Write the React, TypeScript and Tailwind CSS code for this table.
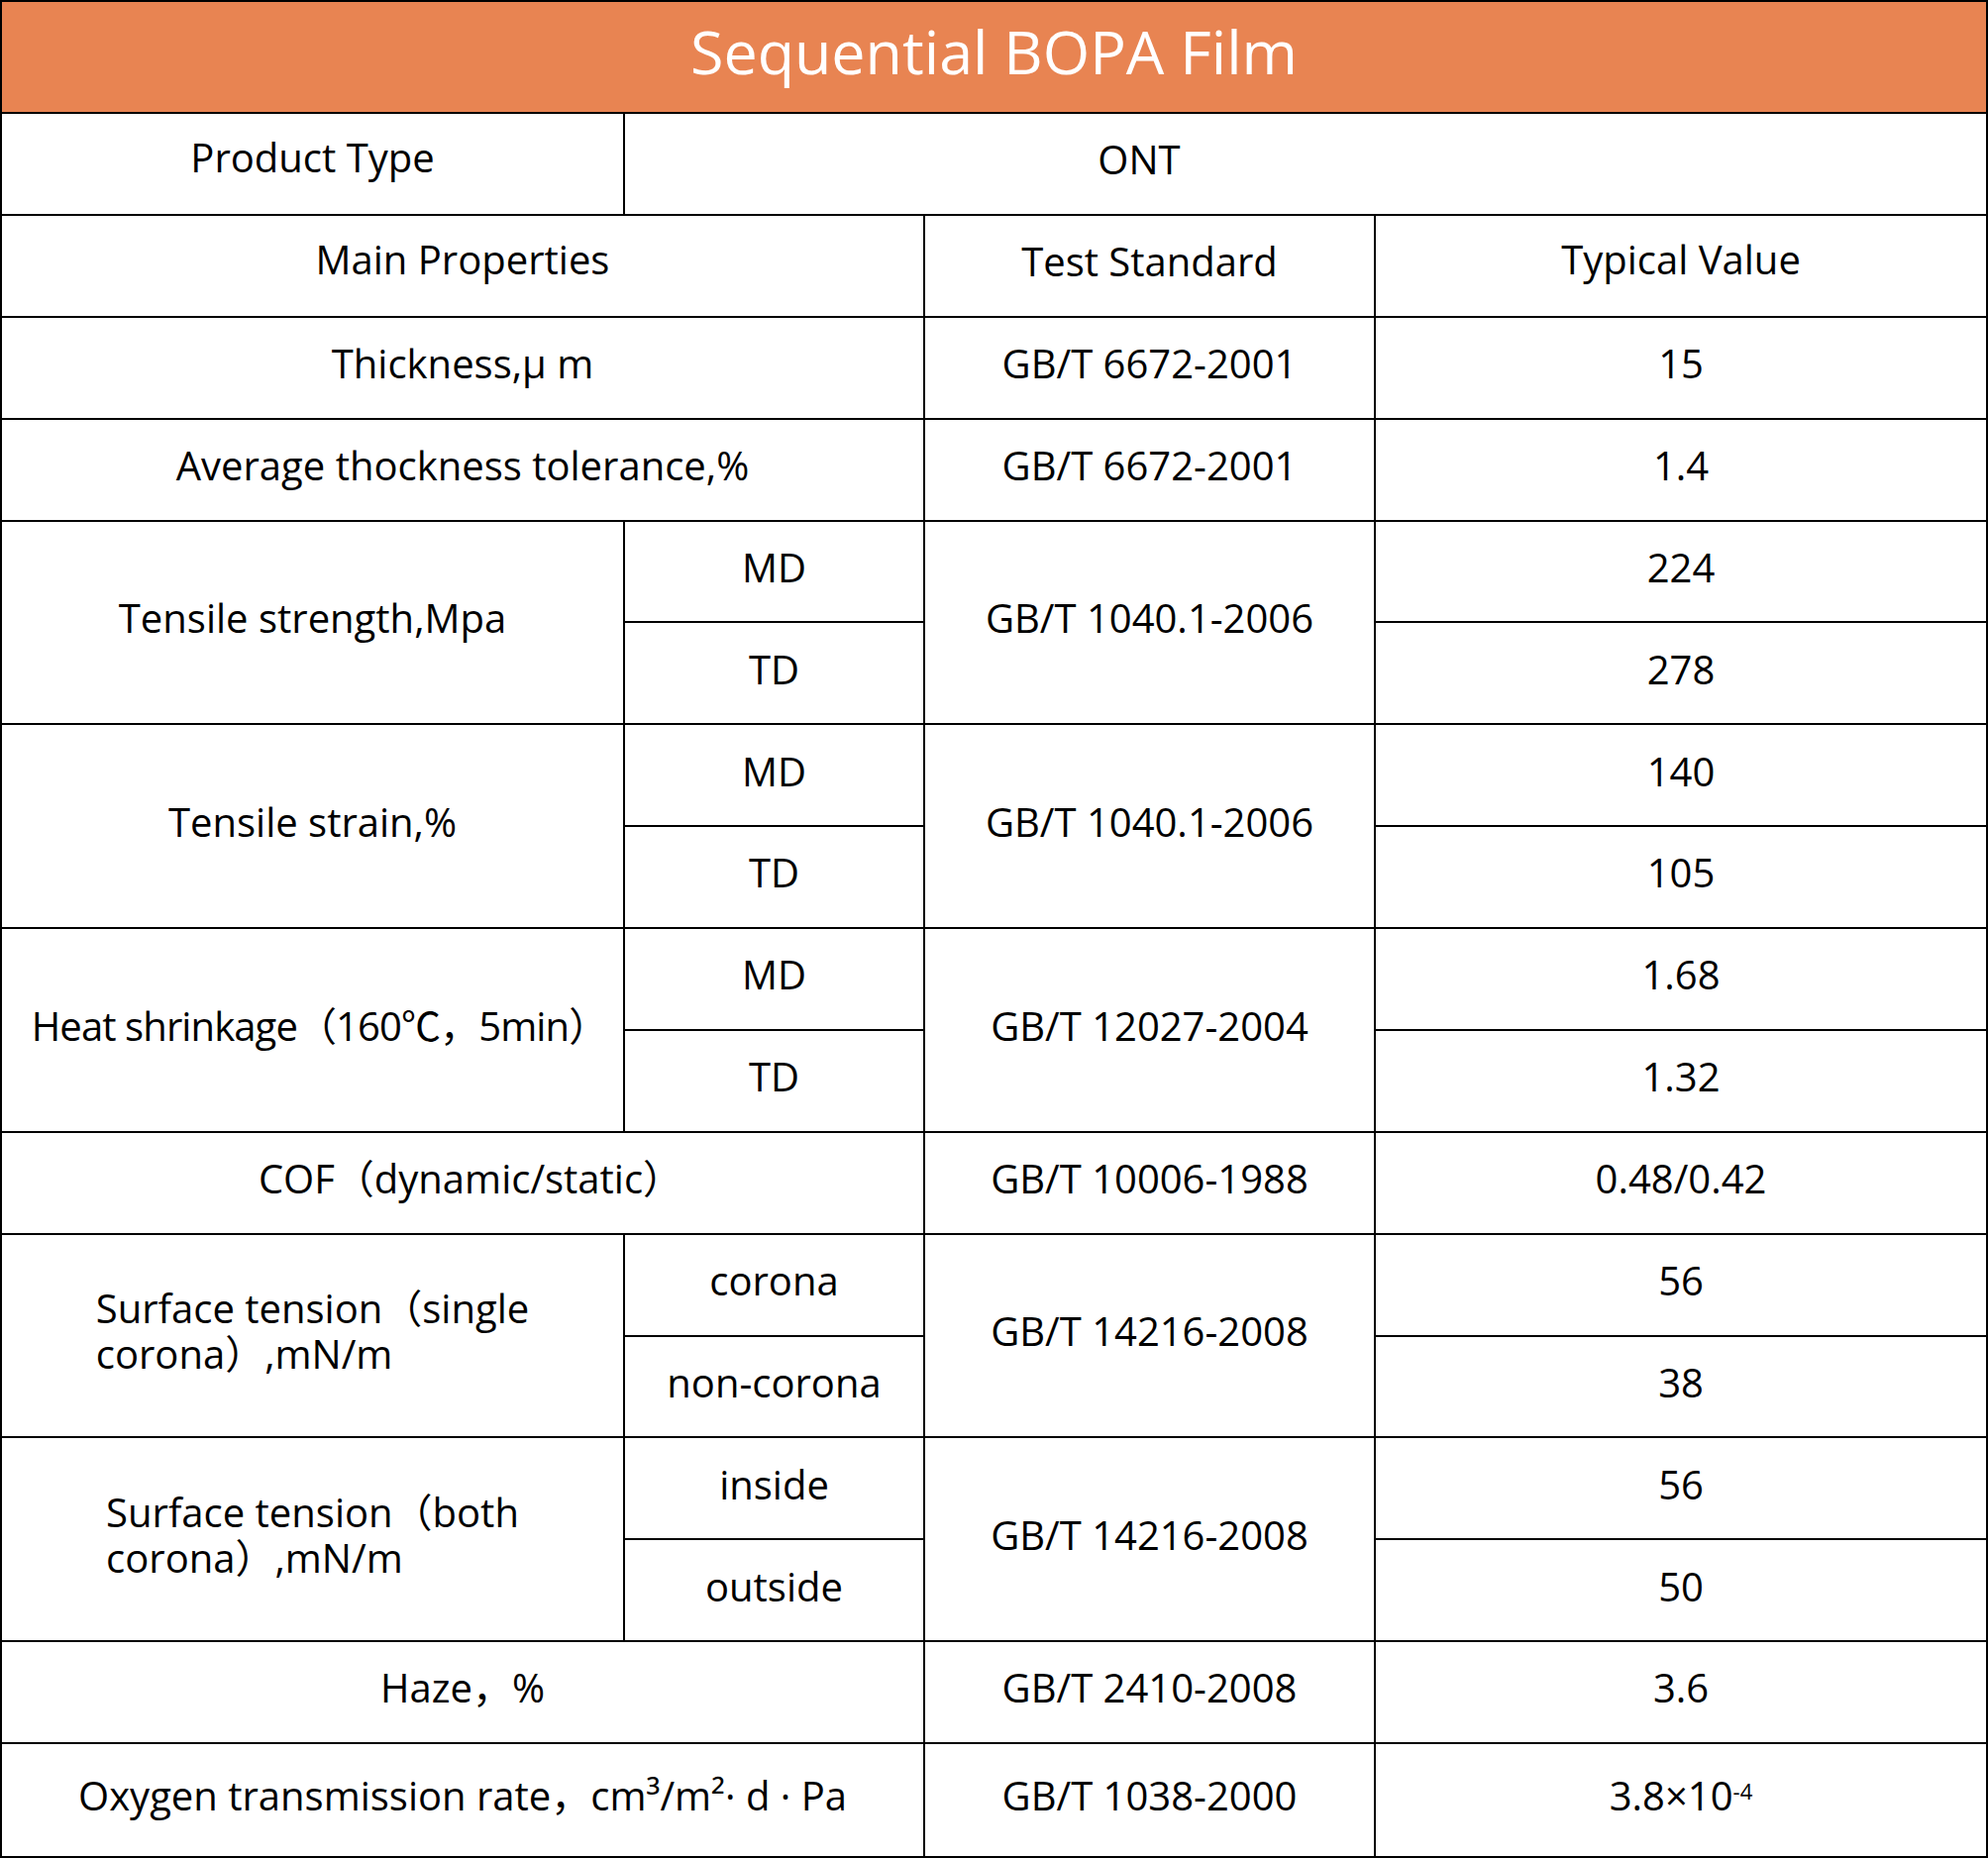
const font = { fontFamily: '"Open Sans", "Noto Sans CJK SC", sans-serif' };

function Cell({
  children,
  className = '',
}: {
  children: React.ReactNode;
  className?: string;
}) {
  return (
    <div className={`flex items-center justify-center bg-white pb-[9px] text-center text-[40px] leading-[1.18] text-black ${className}`}>
      {children}
    </div>
  );
}

type Pair = {
  label: React.ReactNode;
  labelClass?: string;
  subs: [string, string];
  standard: string;
  values: [string, string];
};

const pairs: Pair[] = [
  { label: 'Tensile strength,Mpa', subs: ['MD', 'TD'], standard: 'GB/T 1040.1-2006', values: ['224', '278'] },
  { label: 'Tensile strain,%', subs: ['MD', 'TD'], standard: 'GB/T 1040.1-2006', values: ['140', '105'] },
  {
    label: 'Heat shrinkage（160℃，5min）',
    labelClass: 'tracking-[-0.9px] pl-[14px]',
    subs: ['MD', 'TD'],
    standard: 'GB/T 12027-2004',
    values: ['1.68', '1.32'],
  },
];

function PairRows({ row }: { row: Pair }) {
  return (
    <>
      <Cell className={`row-span-2 ${row.labelClass ?? ''}`}>{row.label}</Cell>
      <Cell>{row.subs[0]}</Cell>
      <Cell className="row-span-2">{row.standard}</Cell>
      <Cell>{row.values[0]}</Cell>
      <Cell>{row.subs[1]}</Cell>
      <Cell>{row.values[1]}</Cell>
    </>
  );
}

export default function App() {
  return (
    <div className="w-[2007px] bg-white" style={font}>
      <div className="grid grid-cols-[627px_301px_453px_616px] grid-rows-[111px_repeat(16,100.875px)_113px] gap-[2px] bg-black p-[2px]">
        <div className="col-span-4 flex items-center justify-center bg-[#e88452] pb-[12px] text-[61px] text-white">
          Sequential BOPA Film
        </div>

        <Cell className="pb-[14px]">Product Type</Cell>
        <Cell className="col-span-3 pr-[336px]">ONT</Cell>

        <Cell className="col-span-2 pb-[14px]">Main Properties</Cell>
        <Cell>Test Standard</Cell>
        <Cell className="pb-[14px]">Typical Value</Cell>

        <Cell className="col-span-2">Thickness,μ m</Cell>
        <Cell>GB/T 6672-2001</Cell>
        <Cell>15</Cell>

        <Cell className="col-span-2">Average thockness tolerance,%</Cell>
        <Cell>GB/T 6672-2001</Cell>
        <Cell>1.4</Cell>

        {pairs.map((row) => (
          <PairRows key={row.standard + row.values[0]} row={row} />
        ))}

        <Cell className="col-span-2 pl-[16px]">COF（dynamic/static）</Cell>
        <Cell>GB/T 10006-1988</Cell>
        <Cell>0.48/0.42</Cell>

        <Cell className="row-span-2">
          <span className="inline-block text-left leading-[1.15]">
            Surface tension（single
            <br />
            corona）,mN/m
          </span>
        </Cell>
        <Cell>corona</Cell>
        <Cell className="row-span-2">GB/T 14216-2008</Cell>
        <Cell>56</Cell>
        <Cell>non-corona</Cell>
        <Cell>38</Cell>

        <Cell className="row-span-2">
          <span className="inline-block text-left leading-[1.15]">
            Surface tension（both
            <br />
            corona）,mN/m
          </span>
        </Cell>
        <Cell>inside</Cell>
        <Cell className="row-span-2">GB/T 14216-2008</Cell>
        <Cell>56</Cell>
        <Cell>outside</Cell>
        <Cell>50</Cell>

        <Cell className="col-span-2">Haze，%</Cell>
        <Cell>GB/T 2410-2008</Cell>
        <Cell>3.6</Cell>

        <Cell className="col-span-2">Oxygen transmission rate，cm³/m²· d · Pa</Cell>
        <Cell>GB/T 1038-2000</Cell>
        <Cell>
          <span>
            3.8×10<sup className="text-[0.55em]">-4</sup>
          </span>
        </Cell>
      </div>
    </div>
  );
}
